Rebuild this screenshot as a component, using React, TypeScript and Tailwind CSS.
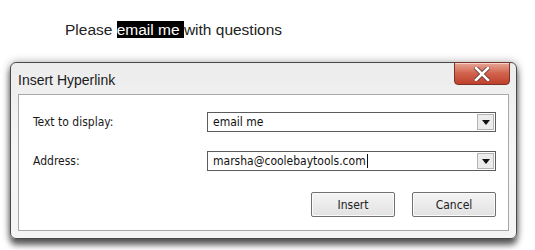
import React from "react";

const dlgFont = { fontFamily: '"DejaVu Sans Condensed", "DejaVu Sans", sans-serif' };

function Field({ value, caret }: { value: string; caret?: boolean }) {
  return (
    <div className="relative h-[20px] w-[289px] border border-[#5c5c5c] bg-white flex items-center pl-[5px] text-[12px] text-[#111]" style={dlgFont}>
      <span className="leading-none">{value}</span>
      {caret && <span className="ml-[1px] inline-block h-[14px] w-px bg-[#111]" />}
      <div className="absolute right-[1px] top-[1px] bottom-[1px] w-[17px] border border-[#b4b4b4] bg-[#ececec] flex items-center justify-center">
        <svg width="8" height="5" viewBox="0 0 8 5">
          <path d="M0 0 L8 0 L4 5 Z" fill="#111" />
        </svg>
      </div>
    </div>
  );
}

function Btn({ label }: { label: string }) {
  return (
    <div
      className="h-[25px] w-[84px] border border-[#707070] rounded-[2px] bg-gradient-to-b from-[#f4f4f4] to-[#e2e2e2] shadow-[inset_0_0_0_1px_#fbfbfb] flex items-center justify-center text-[12px] text-[#222]"
      style={dlgFont}
    >
      {label}
    </div>
  );
}

export default function App() {
  return (
    <div className="w-[535px] h-[250px] bg-white overflow-hidden relative">
      <div
        className="pt-[21px] pl-[65px] text-[15.5px] leading-[18px] text-[#222]"
        style={{ fontFamily: '"Liberation Sans", Arial, sans-serif' }}
      >
        Please <span className="bg-black text-white">email me </span>with questions
      </div>

      <div className="relative ml-[10px] mt-[23px] w-[507px] h-[177px] rounded-[6px] border border-[#4a4a4a] bg-gradient-to-b from-[#ececec] via-[#f6f6f6] to-[#f4f4f4] shadow-[0_6px_6px_rgba(0,0,0,0.6),0_0_8px_rgba(0,0,0,0.35)] flex flex-col">
        <div
          className="h-[31px] pl-[7px] flex items-center text-[14px] text-[#1a1a1a]"
          style={{ fontFamily: '"Liberation Sans", Arial, sans-serif' }}
        >
          <span className="mt-[3px]">Insert Hyperlink</span>
        </div>

        <div className="absolute right-[6px] top-[-1px] w-[56px] h-[23px] rounded-b-[4px] border border-[#7a3328] bg-gradient-to-b from-[#e6a596] via-[#d0624c] to-[#bf3f2a] shadow-[inset_0_1px_0_rgba(255,255,255,0.5)] flex items-center justify-center">
          <svg width="16" height="14" viewBox="0 0 16 14">
            <path d="M2 1 L8 7 L14 1 M2 13 L8 7 L14 13" stroke="#6a3a32" strokeWidth="4.4" fill="none" strokeLinecap="square" />
            <path d="M2 1 L8 7 L14 1 M2 13 L8 7 L14 13" stroke="#ffffff" strokeWidth="2.6" fill="none" strokeLinecap="square" />
          </svg>
        </div>

        <div className="mx-[7px] h-[137px] border border-[#a8a8a8] bg-white flex flex-col pt-[17px]">
          <div className="flex items-center h-[20px] pl-[14px]">
            <div className="w-[174px] text-[12px] text-[#1a1a1a]" style={dlgFont}>Text to display:</div>
            <Field value="email me" />
          </div>
          <div className="flex items-center h-[20px] pl-[14px] mt-[19px]">
            <div className="w-[174px] text-[12px] text-[#1a1a1a]" style={dlgFont}>Address:</div>
            <Field value="marsha@coolebaytools.com" caret />
          </div>
          <div className="flex justify-end gap-[17px] pr-[12px] mt-[21px]">
            <Btn label="Insert" />
            <Btn label="Cancel" />
          </div>
        </div>
      </div>
    </div>
  );
}
